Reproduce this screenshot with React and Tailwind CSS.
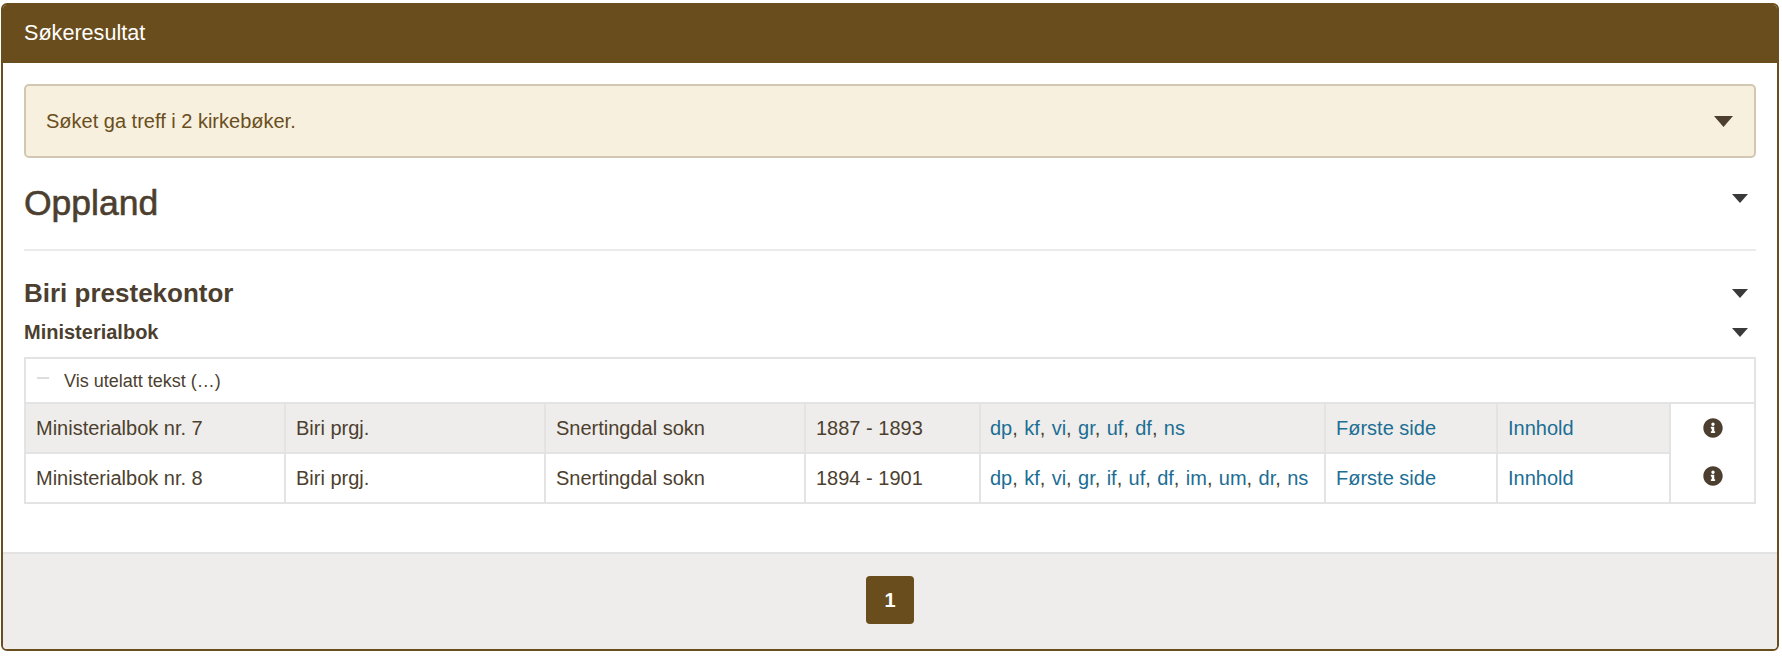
import React from "react";
import { FaInfoCircle } from "react-icons/fa";

const Caret = ({ w = 16, h = 9, color = "#3a3a3a", className = "" }) => (
  <svg width={w} height={h} viewBox="0 0 16 9" preserveAspectRatio="none" className={`block shrink-0 ${className}`}>
    <path d="M0 0H16L8 9Z" fill={color} />
  </svg>
);

const linkCls = "text-[#1c6e94]";

const Codes = ({ items }) => (
  <>
    {items.map((c, i) => (
      <React.Fragment key={c}>
        <span className={linkCls}>{c}</span>
        {i < items.length - 1 ? ", " : ""}
      </React.Fragment>
    ))}
  </>
);

const base = "border-2 border-[#e3e3e3] pr-0 align-middle whitespace-nowrap";
const td = `${base} pl-[10px]`;

const rows = [
  { name: "Ministerialbok nr. 7", years: "1887 - 1893", codes: ["dp", "kf", "vi", "gr", "uf", "df", "ns"], bg: "bg-[#eeedeb]" },
  { name: "Ministerialbok nr. 8", years: "1894 - 1901", codes: ["dp", "kf", "vi", "gr", "if", "uf", "df", "im", "um", "dr", "ns"], bg: "bg-white" },
];

export default function App() {
  return (
    <div className="bg-white pt-[3px] pl-px pr-[3px] pb-1 font-['Liberation_Sans',Arial,sans-serif] text-[#4c3f2f]">
      <div className="rounded-[6px] border-2 border-[#694d1c] overflow-hidden">
        <div className="bg-[#694d1c] h-[59px] pl-[21px] flex items-center text-white text-[21.6px] -mt-px">Søkeresultat</div>
        <div className="bg-white pt-[21px] px-[21px] h-[489px]">
          <div className="h-[74px] rounded-[5px] border-2 border-[#d2c8b2] bg-[#f7f0df] pl-[20px] pr-[21px] flex items-center justify-between text-[#6a4e1c] text-[20px]">
            <span>Søket ga treff i 2 kirkebøker.</span>
            <Caret w={19} h={11} color="#4c3f2f" />
          </div>
          <div className="flex items-start justify-between mt-[18px] h-[46px] pr-[8px]">
            <h1 className="mt-[4px] text-[35.5px] leading-[46px] font-normal [-webkit-text-stroke:0.6px_#4c3f2f]">Oppland</h1>
            <Caret className="mt-[18px]" />
          </div>
          <div className="h-[2px] bg-[#ebebeb] mt-[27px]" />
          <div className="flex items-center justify-between mt-[27px] h-[30px] pr-[8px]">
            <h2 className="text-[26px] font-bold leading-[30px]">Biri prestekontor</h2>
            <Caret />
          </div>
          <div className="flex items-center justify-between mt-[9px] h-[30px] pr-[8px]">
            <h3 className="text-[20px] font-bold leading-[30px]">Ministerialbok</h3>
            <Caret />
          </div>
          <div className="mt-[10px] h-[45px] border-2 border-b-0 border-[#e3e3e3] flex items-center pl-[11px] pt-[2px] text-[18px]">
            <span className="block w-[12px] h-[2px] bg-[#dddddd] -mt-[8px]" />
            <span className="ml-[15px]">Vis utelatt tekst (…)</span>
          </div>
          <table className="w-full table-fixed border-collapse text-[20px] text-[#4c3f2f]">
            <colgroup>
              <col className="w-[260px]" />
              <col className="w-[260px]" />
              <col className="w-[260px]" />
              <col className="w-[175px]" />
              <col className="w-[345px]" />
              <col className="w-[172px]" />
              <col className="w-[173px]" />
              <col />
            </colgroup>
            <tbody>
              {rows.map((r, i) => (
                <tr key={r.name} className="h-[50px]">
                  <td className={`${td} ${r.bg}`}>{r.name}</td>
                  <td className={`${td} ${r.bg}`}>Biri prgj.</td>
                  <td className={`${td} ${r.bg}`}>Snertingdal sokn</td>
                  <td className={`${td} ${r.bg}`}>{r.years}</td>
                  <td className={`${base} pl-[9px] ${r.bg} [word-spacing:0.8px]`}><Codes items={r.codes} /></td>
                  <td className={`${td} ${r.bg} ${linkCls}`}>Første side</td>
                  <td className={`${td} ${r.bg} ${linkCls}`}>Innhold</td>
                  {i === 0 && (
                    <td rowSpan={2} className="border-2 border-[#e3e3e3] bg-white align-top pt-[14px]">
                      <div className="flex flex-col items-center gap-[28px] text-[#4c3f2f]">
                        <FaInfoCircle size={20} />
                        <FaInfoCircle size={20} />
                      </div>
                    </td>
                  )}
                </tr>
              ))}
            </tbody>
          </table>
        </div>
        <div className="bg-[#eeedeb] border-t-2 border-[#e3e3e3] h-[97px] flex items-start justify-center pt-[22px]">
          <div className="w-[48px] h-[48px] rounded-[4px] bg-[#694d1c] flex items-center justify-center text-white text-[20px] font-bold">1</div>
        </div>
      </div>
    </div>
  );
}
